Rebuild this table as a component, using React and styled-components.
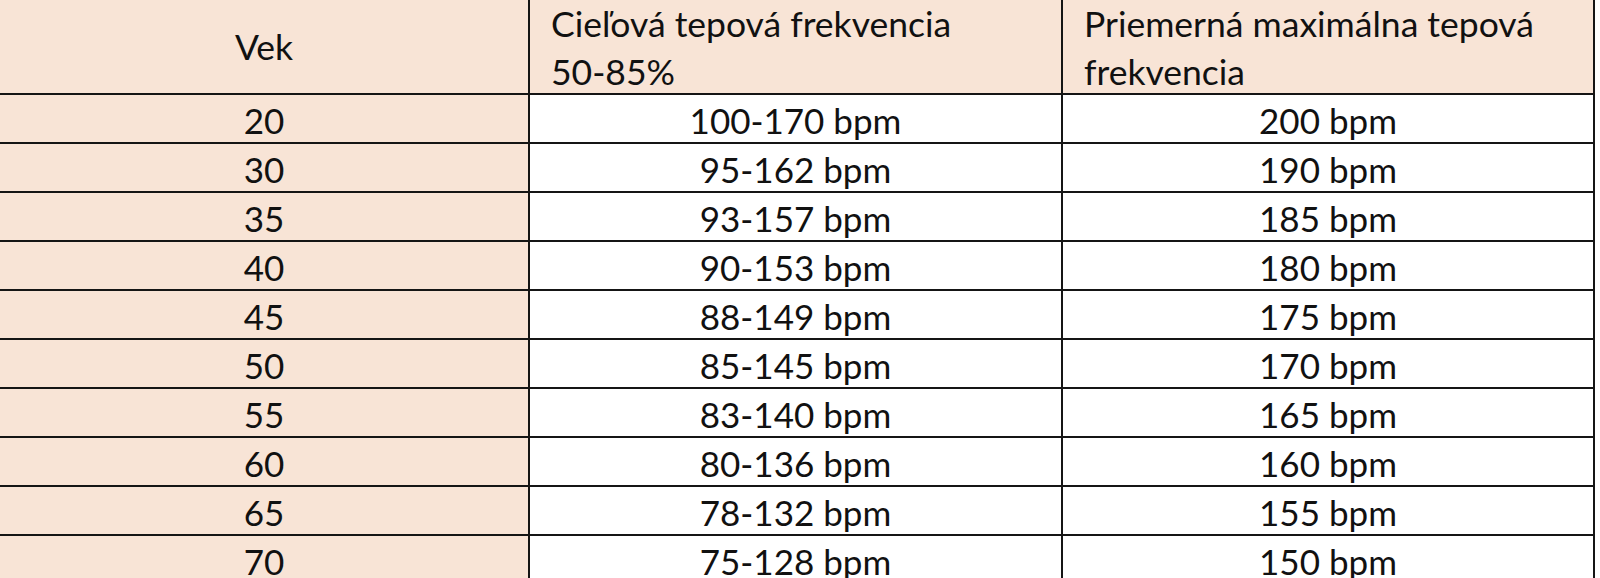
import React from 'react';
import styled, { createGlobalStyle } from 'styled-components';

const Colors = {
  Peach: '#f8e4d6',
  Line: '#151515',
  Text: '#111111',
  White: '#ffffff',
};

const rows = [
  { age: '20', target: '100-170 bpm', max: '200 bpm' },
  { age: '30', target: '95-162 bpm', max: '190 bpm' },
  { age: '35', target: '93-157 bpm', max: '185 bpm' },
  { age: '40', target: '90-153 bpm', max: '180 bpm' },
  { age: '45', target: '88-149 bpm', max: '175 bpm' },
  { age: '50', target: '85-145 bpm', max: '170 bpm' },
  { age: '55', target: '83-140 bpm', max: '165 bpm' },
  { age: '60', target: '80-136 bpm', max: '160 bpm' },
  { age: '65', target: '78-132 bpm', max: '155 bpm' },
  { age: '70', target: '75-128 bpm', max: '150 bpm' },
];

const App = () => {
  return (
    <>
      <GlobalStyle />
      <Table>
        <HeaderCell $center>Vek</HeaderCell>
        <HeaderCell>
          Cieľová tepová frekvencia
          <br />
          50-85%
        </HeaderCell>
        <HeaderCell>
          Priemerná maximálna tepová
          <br />
          frekvencia
        </HeaderCell>
        {rows.map((row) => (
          <React.Fragment key={row.age}>
            <BodyCell $shaded>{row.age}</BodyCell>
            <BodyCell>{row.target}</BodyCell>
            <BodyCell>{row.max}</BodyCell>
          </React.Fragment>
        ))}
      </Table>
    </>
  );
};

export default App;

const GlobalStyle = createGlobalStyle`
  html, body {
    margin: 0;
    padding: 0;
    background: ${Colors.White};
    overflow: hidden;
  }
  body {
    font-family: Lato, "Open Sans", sans-serif;
    color: ${Colors.Text};
  }
`;

const Table = styled.div`
  display: grid;
  grid-template-columns: 530px 533px 532px;
  grid-template-rows: 95px;
  grid-auto-rows: 49px;
  width: 1595px;
`;

const Cell = styled.div`
  box-sizing: border-box;
  border-right: 2px solid ${Colors.Line};
  border-bottom: 2px solid ${Colors.Line};
  font-size: 35px;
  line-height: 47px;
  white-space: nowrap;
`;

const HeaderCell = styled(Cell)`
  background: ${Colors.Peach};
  font-size: 35.5px;
  line-height: 48px;
  padding: 0 0 0 21px;
  ${({ $center }) =>
    $center &&
    `
    text-align: center;
    padding-left: 0;
    line-height: 93px;
  `}
`;

const BodyCell = styled(Cell)`
  background: ${({ $shaded }) => ($shaded ? Colors.Peach : Colors.White)};
  text-align: center;
  padding-top: 2px;
`;
